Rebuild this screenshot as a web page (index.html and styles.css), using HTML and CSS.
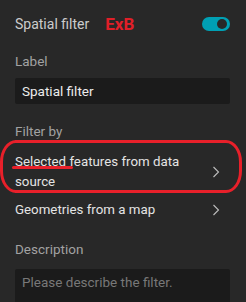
FILE: index.html
```html
<!DOCTYPE html>
<html lang="en">
<head>
    <meta charset="UTF-8">
    <title>Spatial filter</title>
    <link rel="stylesheet" href="styles.css">
</head>
<body>
    <div class="panel">
        <div class="header">
            <div class="title">Spatial filter</div>
            <div class="exb">ExB</div>
            <div class="toggle"><span class="knob"></span></div>
        </div>

        <div class="section">
            <div class="section-label">Label</div>
            <input type="text" class="text-input" value="Spatial filter">
        </div>

        <div class="section">
            <div class="section-label">Filter by</div>
            <div class="option">
                <span class="option-text">Selected features from data source</span>
                <svg class="chevron" width="8" height="12" viewBox="0 0 8 12"><path d="M1.5 1 L6.5 6 L1.5 11" fill="none" stroke="#bdbdbd" stroke-width="1.1"/></svg>
                <span class="mark-ring"></span>
                <span class="mark-line"></span>
            </div>
            <div class="option">
                <span class="option-text">Geometries from a map</span>
                <svg class="chevron" width="8" height="12" viewBox="0 0 8 12"><path d="M1.5 1 L6.5 6 L1.5 11" fill="none" stroke="#bdbdbd" stroke-width="1.1"/></svg>
            </div>
        </div>

        <div class="section desc">
            <div class="section-label">Description</div>
            <textarea class="text-area" placeholder="Please describe the filter."></textarea>
        </div>
    </div>
</body>
</html>
```

FILE: styles.css
```css
* {
    margin: 0;
    padding: 0;
    box-sizing: border-box;
}

body {
    font-family: Roboto, 'Noto Sans', sans-serif;
    background: #282828;
    color: #d6d6d6;
    overflow: hidden;
}

.panel {
    padding: 14px 16px 0 15px;
}

.header {
    display: flex;
    align-items: center;
    height: 20px;
}

.title {
    font-size: 14px;
    color: #cccccc;
}

.exb {
    margin-left: 16px;
    font-size: 17px;
    font-weight: bold;
    color: #e01f28;
    flex: 1;
}

.toggle {
    width: 28px;
    height: 14px;
    border-radius: 7px;
    background: #00a0b4;
    position: relative;
}

.knob {
    position: absolute;
    right: 3px;
    top: 2px;
    width: 10px;
    height: 10px;
    border-radius: 50%;
    background: #282828;
}

.section {
    margin-top: 18px;
}

.section-label {
    font-size: 13.5px;
    color: #a2a2a2;
    line-height: 18px;
    margin-bottom: 8px;
}

.desc {
    margin-top: 16px;
}

.desc .section-label {
    margin-bottom: 11px;
}

.text-input {
    display: block;
    width: 100%;
    height: 26px;
    background: #1b1b1b;
    border: none;
    border-radius: 2px;
    padding: 0 7px;
    font-family: inherit;
    font-size: 13.5px;
    color: #ececec;
    outline: none;
}

.option {
    position: relative;
    display: flex;
    align-items: center;
    justify-content: space-between;
    font-size: 13.3px;
    line-height: 20px;
    color: #e4e4e4;
    padding: 4px 0;
}

.option-text {
    max-width: 175px;
}

.chevron {
    margin-right: 10px;
    flex-shrink: 0;
}

.mark-ring {
    position: absolute;
    left: -15px;
    right: -12px;
    top: -8px;
    bottom: 3px;
    border: 3px solid #e8202a;
    border-radius: 16px / 22px;
}

.mark-line {
    position: absolute;
    left: -3px;
    top: 18px;
    width: 61px;
    height: 3px;
    border-radius: 2px;
    background: #e8202a;
}

.text-area {
    display: block;
    width: 100%;
    height: 60px;
    background: #1b1b1b;
    border: none;
    border-radius: 2px;
    padding: 5px 7px;
    font-family: inherit;
    font-size: 13.5px;
    color: #ececec;
    resize: none;
    outline: none;
}

.text-area::placeholder {
    color: #787878;
}
```
